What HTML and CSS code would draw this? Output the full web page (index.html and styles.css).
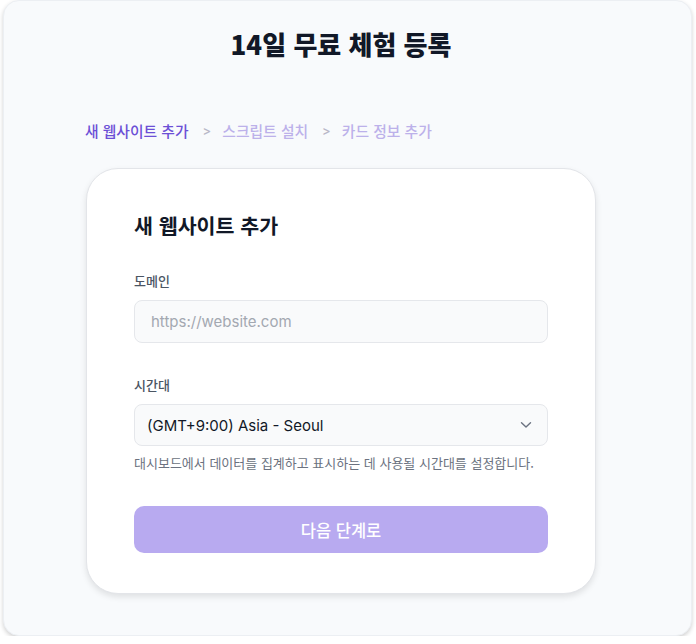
FILE: index.html
```html
<!DOCTYPE html>
<html lang="ko">
<head>
<meta charset="utf-8">
<link rel="stylesheet" href="styles.css">
</head>
<body>
<div class="panel">
  <div class="content">
    <h1 class="title">14일 무료 체험 등록</h1>
    <nav class="crumbs">
      <span class="crumb active">새 웹사이트 추가</span>
      <span class="sep">&gt;</span>
      <span class="crumb">스크립트 설치</span>
      <span class="sep">&gt;</span>
      <span class="crumb">카드 정보 추가</span>
    </nav>
    <div class="card">
      <h2 class="card-title">새 웹사이트 추가</h2>
      <label class="label">도메인</label>
      <div class="input placeholder">https://website.com</div>
      <label class="label label-2">시간대</label>
      <div class="input select">
        <span>(GMT+9:00) Asia - Seoul</span>
        <svg class="chev" width="12" height="8" viewBox="0 0 12 8"><path d="M1.5 1.8 L6 6 L10.5 1.8" fill="none" stroke="#6b7280" stroke-width="1.4" stroke-linecap="round" stroke-linejoin="round"/></svg>
      </div>
      <p class="help">대시보드에서 데이터를 집계하고 표시하는 데 사용될 시간대를 설정합니다.</p>
      <button class="btn">다음 단계로</button>
    </div>
  </div>
</div>
</body>
</html>
```
FILE: styles.css
```css
* { box-sizing: border-box; }
html, body { margin: 0; padding: 0; background: #ffffff; }
body {
  font-family: Inter, "Noto Sans CJK KR", sans-serif;
  color: #111827;
}
.panel {
  margin: 0 4px 0 3px;
  height: 636px;
  border-radius: 16px;
  background: #f8fafc;
  border: 1px solid #eceff3;
  box-shadow: 0 2px 4px rgba(0,0,0,0.18);
  padding: 26px 95px 0 82px;
}
.content { width: 510px; }
.title {
  margin: 0;
  text-align: center;
  font-family: "Noto Sans CJK KR", sans-serif;
  font-size: 26px;
  line-height: 34px;
  font-weight: 900;
  color: #111827;
}
.crumbs {
  margin-top: 60px;
  display: flex;
  align-items: center;
  font-family: "Noto Sans CJK KR", sans-serif;
  font-size: 14.8px;
  line-height: 20px;
  font-weight: 500;
  margin-left: -1px;
}
.crumb { color: #bcb1ea; }
.crumb.active { color: #6c4fd6; }
.sep {
  color: #b8b8c8;
  font-family: Inter, sans-serif;
  font-size: 13px;
  margin: 0 11px 0 14px;
}
.card {
  margin-top: 27px;
  background: #ffffff;
  border: 1px solid #e3e5e9;
  border-radius: 32px;
  box-shadow: 0 3px 6px rgba(0,0,0,0.10);
  padding: 42px 47px 40px 47px;
  height: 426px;
}
.card-title {
  margin: 0;
  font-family: "Noto Sans CJK KR", sans-serif;
  font-size: 20.6px;
  line-height: 28px;
  font-weight: 700;
  color: #111827;
}
.label {
  display: block;
  margin-top: 32px;
  font-family: "Noto Sans CJK KR", sans-serif;
  font-size: 13px;
  line-height: 20px;
  font-weight: 500;
  color: #4b5563;
}
.input {
  margin-top: 9px;
  height: 43px;
  border: 1px solid #e5e7eb;
  border-radius: 8px;
  background: #f9fafb;
  display: flex;
  align-items: center;
  padding: 0 16px;
  font-size: 15px;
}
.placeholder { color: #a3a8b1; }
.select {
  height: 42px;
  padding: 0 15px 0 12px;
  justify-content: space-between;
  color: #111827;
}
.chev { display: block; }
.help {
  margin: 8px 0 0;
  font-family: "Noto Sans CJK KR", sans-serif;
  font-size: 13px;
  line-height: 18px;
  color: #6b7280;
}
.btn {
  margin-top: 34px;
  width: 100%;
  height: 47px;
  border: none;
  border-radius: 10px;
  background: #b8aaf0;
  color: #ffffff;
  font-family: "Noto Sans CJK KR", sans-serif;
  font-size: 16.5px;
  font-weight: 500;
}
```
